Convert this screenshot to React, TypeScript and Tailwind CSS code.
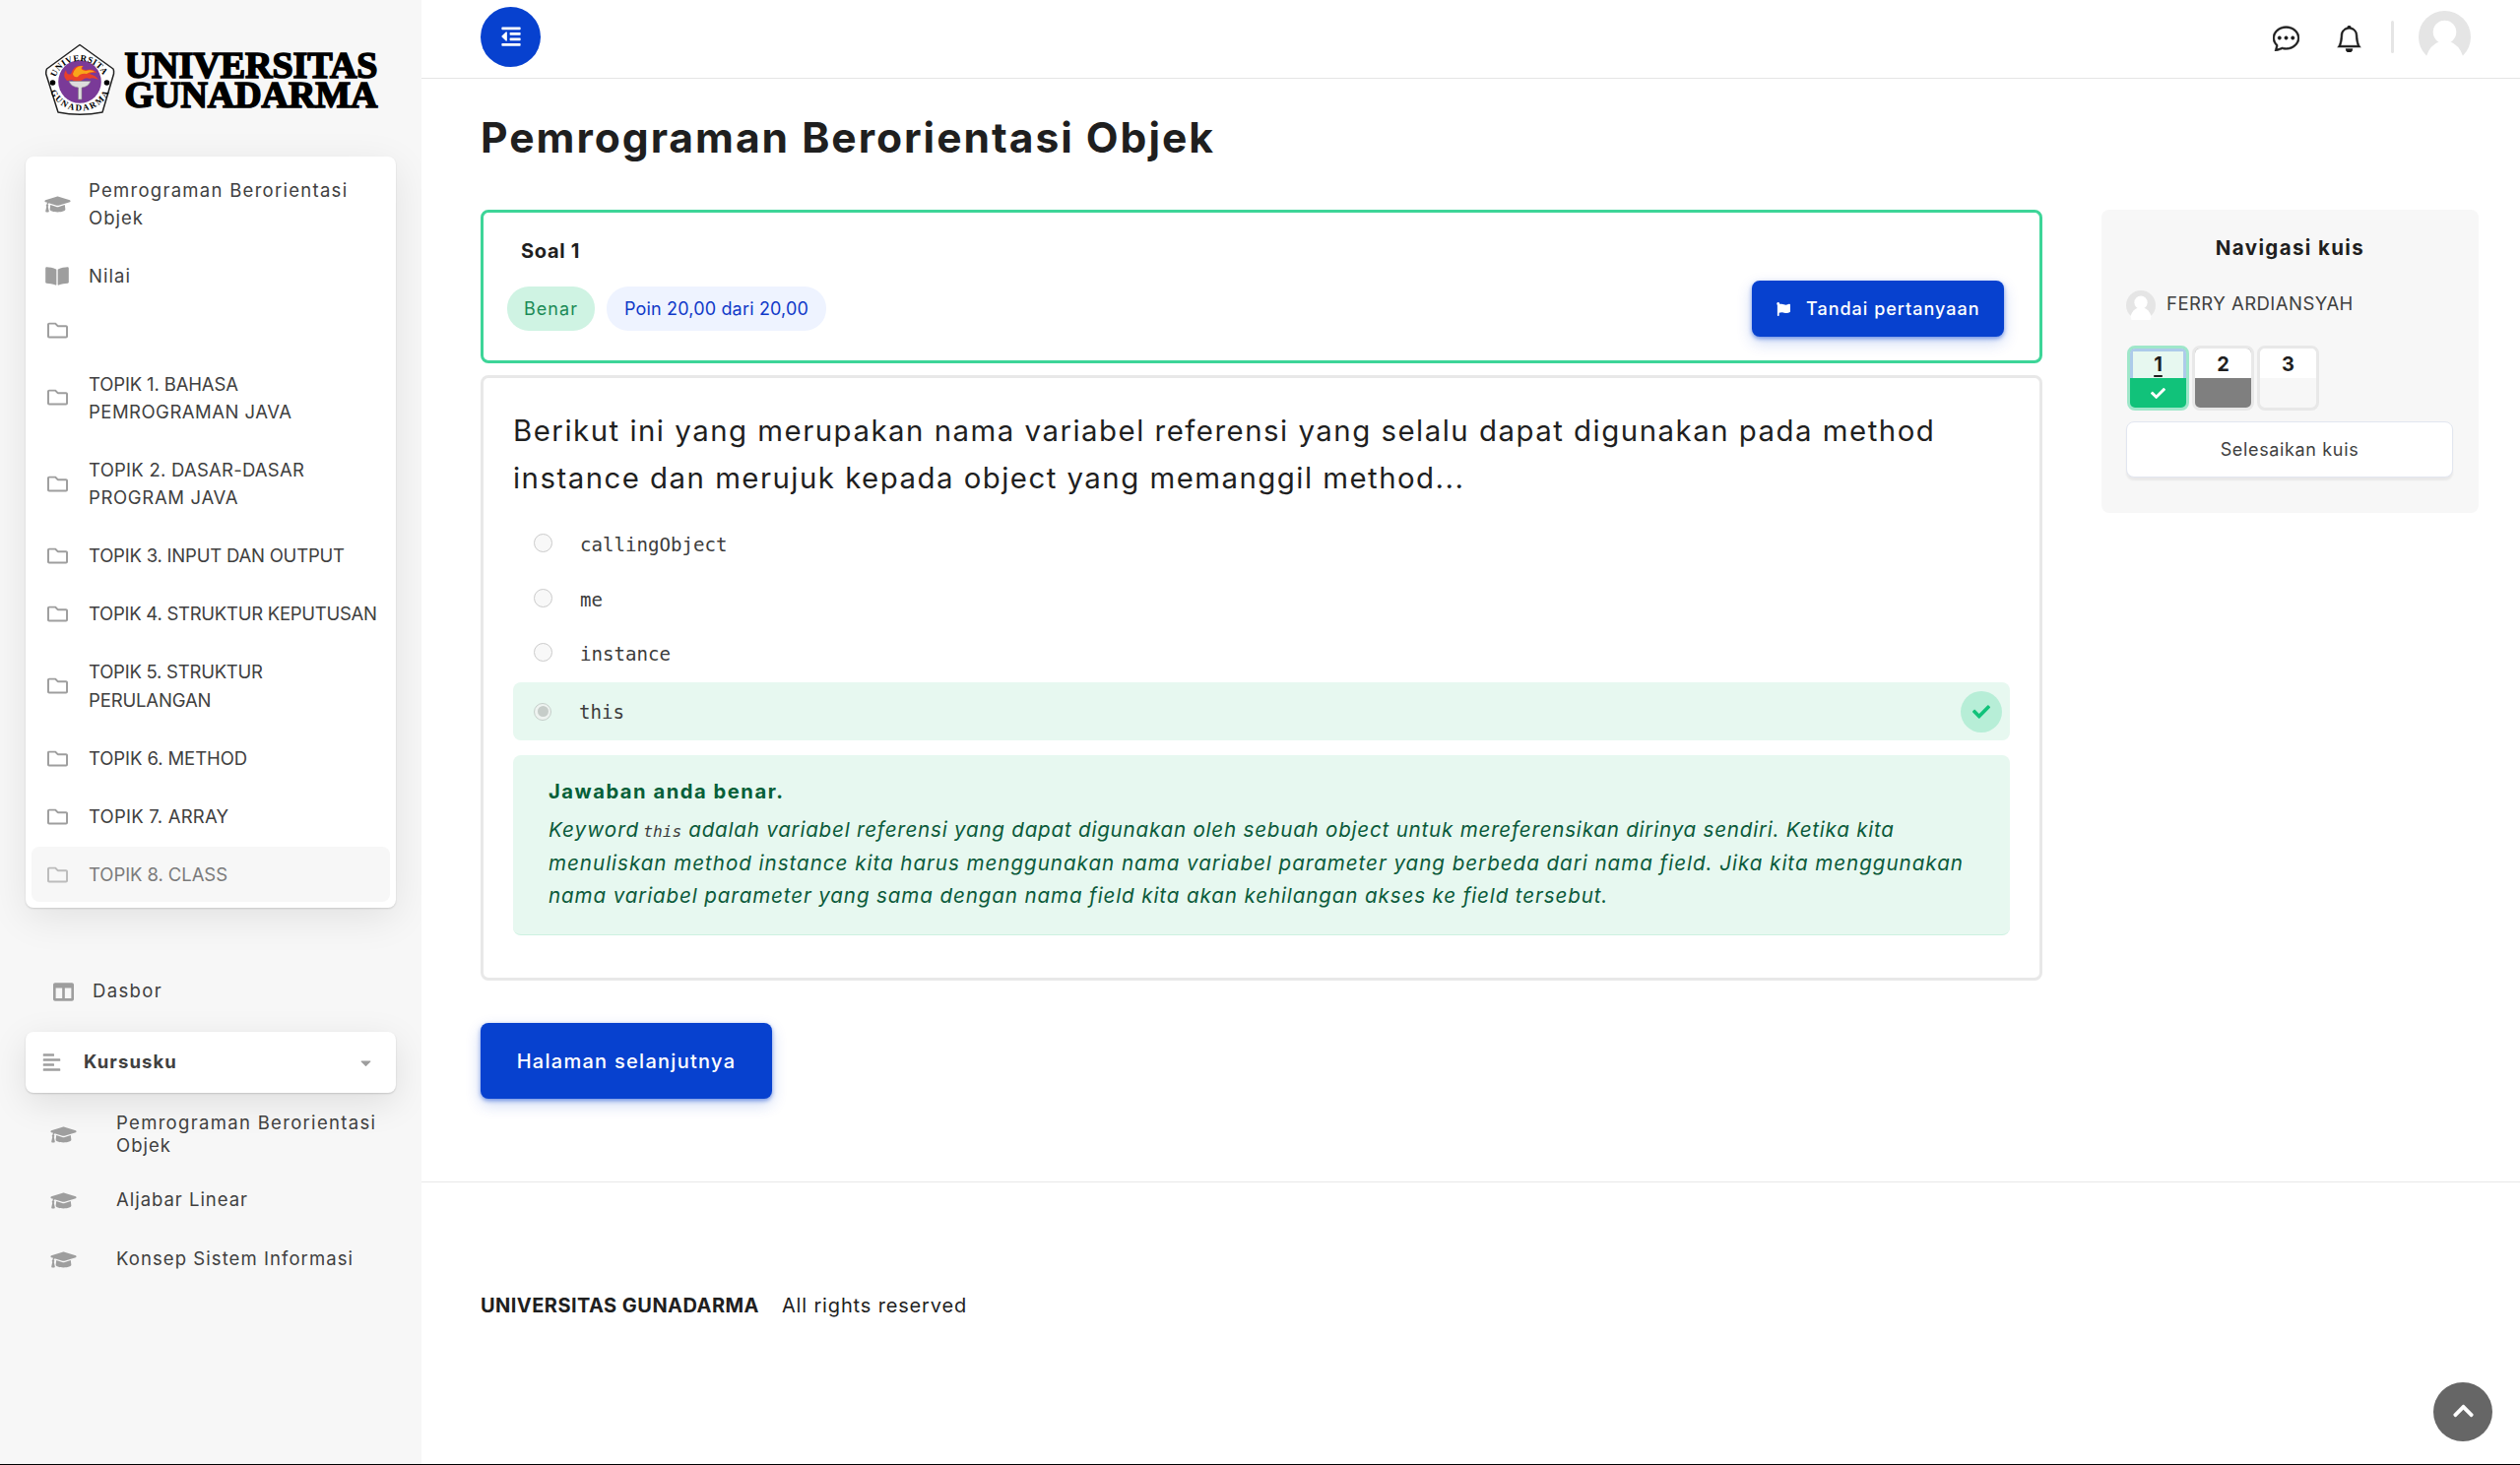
import type { ReactNode } from "react";
import {
  FaAlignLeft,
  FaBookOpen,
  FaCaretDown,
  FaCheck,
  FaChevronUp,
  FaColumns,
  FaFlag,
  FaGraduationCap,
  FaOutdent,
  FaRegFolder,
} from "react-icons/fa";
import { BsBell, BsChatDots } from "react-icons/bs";

type Line = { text: string; track: string };
type CourseItem = { icon: "cap" | "book" | "folder"; lines: Line[]; active?: boolean };

const courseItems: CourseItem[] = [
  {
    icon: "cap",
    lines: [
      { text: "Pemrograman Berorientasi", track: "tracking-[0.069em]" },
      { text: "Objek", track: "tracking-[0.055em]" },
    ],
  },
  { icon: "book", lines: [{ text: "Nilai", track: "tracking-[0.057em]" }] },
  { icon: "folder", lines: [] },
  {
    icon: "folder",
    lines: [
      { text: "TOPIK 1. BAHASA", track: "tracking-[-0.008em]" },
      { text: "PEMROGRAMAN JAVA", track: "tracking-[0.026em]" },
    ],
  },
  {
    icon: "folder",
    lines: [
      { text: "TOPIK 2. DASAR-DASAR", track: "tracking-[0.013em]" },
      { text: "PROGRAM JAVA", track: "tracking-[0.036em]" },
    ],
  },
  { icon: "folder", lines: [{ text: "TOPIK 3. INPUT DAN OUTPUT", track: "tracking-[-0.0116em]" }] },
  { icon: "folder", lines: [{ text: "TOPIK 4. STRUKTUR KEPUTUSAN", track: "tracking-[-0.0145em]" }] },
  {
    icon: "folder",
    lines: [
      { text: "TOPIK 5. STRUKTUR", track: "tracking-[-0.0127em]" },
      { text: "PERULANGAN", track: "tracking-[-0.008em]" },
    ],
  },
  { icon: "folder", lines: [{ text: "TOPIK 6. METHOD", track: "tracking-[-0.005em]" }] },
  { icon: "folder", lines: [{ text: "TOPIK 7. ARRAY", track: "tracking-[0.012em]" }] },
  { icon: "folder", lines: [{ text: "TOPIK 8. CLASS", track: "tracking-[-0.004em]" }], active: true },
];

function CourseIcon({ kind }: { kind: CourseItem["icon"] }) {
  if (kind === "cap") return <FaGraduationCap className="h-[21px] w-[27px]" />;
  if (kind === "book") return <FaBookOpen className="h-[21px] w-[24px]" />;
  return <FaRegFolder className="h-[21px] w-[21px]" />;
}

function Logo() {
  return (
    <div className="ml-[46px] mt-[44px] flex h-[75px] items-start">
      <svg width="72" height="75" viewBox="0 0 72 75" className="overflow-visible">
        <path
          d="M35 1.500 L69 26 Q70 28 69.500 31 L58 70 Q35 74.500 13 70 L0.700 31 Q0.500 28 1.500 26 Z"
          fill="#fff"
          stroke="#222"
          strokeWidth="1.500"
          strokeLinejoin="round"
        />
        <circle cx="35" cy="39" r="21.800" fill="#7a3a98" />
        <path
          d="M22 38 Q17 33 21 27 Q22 33 26 31 Q29 21 39 23 Q35 26 41 27 Q49 25 52 30 Q46 29 45 31 Q52 33 54 37 Q48 34 45 36 Q41 34 38 37 Q32 41 27 37 Z"
          fill="#e8402a"
        />
        <path d="M28 31 Q31 22 38 23 Q34 27 41 28 Q47 26 50 29 Q44 29 42 31 Q36 30 33 34 Q29 35 28 31 Z" fill="#f9a51a" />
        <path d="M24 38.500 H46 Q44 44 37 45 V57 H33.500 V45 Q26 44 24 38.500 Z" fill="#ddd" stroke="#888" strokeWidth="0.600" />
        <circle cx="7.500" cy="40" r="2.800" fill="#000" />
        <circle cx="62.500" cy="40" r="2.800" fill="#000" />
        <defs>
          <path id="arc-top" d="M10.500 34.500 A26 25 0 0 1 59.500 34.500" />
          <path id="arc-bottom" d="M5 48 A31.500 29.500 0 0 0 65 48" />
        </defs>
        <text fontFamily="Liberation Serif, serif" fontWeight="700" fontSize="9" fill="#000">
          <textPath href="#arc-top" textLength="66" lengthAdjust="spacing">
            UNIVERSITAS
          </textPath>
        </text>
        <text fontFamily="Liberation Serif, serif" fontWeight="700" fontSize="9" fill="#000">
          <textPath href="#arc-bottom" startOffset="1" textLength="74" lengthAdjust="spacing">
            GUNADARMA
          </textPath>
        </text>
      </svg>
      <svg width="270" height="75" viewBox="0 0 270 75" className="ml-[6px]">
        <g fontFamily="Liberation Serif, serif" fontWeight="700" fontSize="37" fill="#000" stroke="#000" strokeWidth="1.600">
          <text x="2.500" y="34.500" textLength="257" lengthAdjust="spacingAndGlyphs">
            UNIVERSITAS
          </text>
          <text x="2.500" y="64.500" textLength="257" lengthAdjust="spacingAndGlyphs">
            GUNADARMA
          </text>
        </g>
      </svg>
    </div>
  );
}

function CourseNav() {
  return (
    <nav className="ml-[26px] mt-[40px] flex h-[763px] w-[376px] flex-col gap-[3px] rounded-[8px] bg-white p-[6px] text-[18.5px] leading-[28.4px] text-[#404040] shadow-[0_1px_2px_rgba(0,0,0,0.14),0_10px_40px_rgba(0,0,0,0.09)]">
      {courseItems.map((item, i) => (
        <div
          key={i}
          className={
            item.active
              ? "flex items-center rounded-[8px] bg-[#f7f7f7] py-[13.8px] text-[#7b7b7b]"
              : item.lines.length
                ? "flex items-center py-[13.8px]"
                : "flex h-[47.6px] items-center"
          }
        >
          <span className={item.active ? "flex w-[52px] justify-center text-[#bcbcbc]" : "flex w-[52px] justify-center text-[#9e9e9e]"}>
            <CourseIcon kind={item.icon} />
          </span>
          <span className="ml-[6px] whitespace-nowrap">
            {item.lines.map((l) => (
              <span key={l.text} className={`block ${l.track}`}>
                {l.text}
              </span>
            ))}
          </span>
        </div>
      ))}
    </nav>
  );
}

function SubCourse({ children, className }: { children: ReactNode; className: string }) {
  return (
    <div className={`flex items-center ${className}`}>
      <FaGraduationCap className="ml-[51px] h-[21px] w-[27px] text-[#9e9e9e]" />
      <div className="ml-[40px] whitespace-nowrap">{children}</div>
    </div>
  );
}

function Sidebar() {
  return (
    <aside className="flex w-[428px] shrink-0 flex-col overflow-hidden bg-[#f7f7f7] text-[18.5px] text-[#404040]">
      <Logo />
      <CourseNav />
      <div className="mt-[56px] flex h-[58px] items-center">
        <FaColumns className="ml-[54px] h-[21px] w-[21px] text-[#9e9e9e]" />
        <span className="ml-[19px] tracking-[0.074em]">Dasbor</span>
      </div>
      <div className="ml-[26px] mt-[12px] flex h-[62px] w-[376px] items-center rounded-[8px] bg-white shadow-[0_1px_2px_rgba(0,0,0,0.16),0_10px_36px_rgba(0,0,0,0.10)]">
        <FaAlignLeft className="ml-[17px] h-[20px] w-[19px] text-[#9e9e9e]" />
        <span className="ml-[23px] font-bold tracking-[0.058em]">Kursusku</span>
        <FaCaretDown className="ml-auto mr-[24px] h-[17px] w-[13px] text-[#9e9e9e]" />
      </div>
      <SubCourse className="mt-[14px] h-[56px] leading-[23px]">
        <span className="block tracking-[0.071em]">Pemrograman Berorientasi</span>
        <span className="block tracking-[0.055em]">Objek</span>
      </SubCourse>
      <SubCourse className="mt-[10px] h-[58px]">
        <span className="tracking-[0.0525em]">Aljabar Linear</span>
      </SubCourse>
      <SubCourse className="mt-[2px] h-[58px]">
        <span className="tracking-[0.058em]">Konsep Sistem Informasi</span>
      </SubCourse>
    </aside>
  );
}

function Header() {
  return (
    <header className="flex h-[80px] shrink-0 items-start border-b border-[#e5e5e5]">
      <button className="ml-[60px] mt-[7px] flex h-[61px] w-[61px] items-center justify-center rounded-full bg-[#0741cf] text-white">
        <FaOutdent className="mb-[2px] h-[22px] w-[20px]" />
      </button>
      <BsChatDots className="ml-auto mt-[25px] h-[27px] w-[27px] text-[#1b1b1b]" stroke="currentColor" strokeWidth={0.35} />
      <BsBell className="ml-[37px] mt-[26px] h-[27px] w-[27px] text-[#1b1b1b]" stroke="currentColor" strokeWidth={0.35} />
      <span className="ml-[29px] mt-[21px] h-[33px] w-[3px] rounded-full bg-[#e5e5e5]" />
      <span className="ml-[25px] mr-[50px] mt-[11px]">
        <Avatar className="h-[53px] w-[53px]" />
      </span>
    </header>
  );
}

function Avatar({ className }: { className: string }) {
  return (
    <svg viewBox="0 0 54 54" className={className}>
      <circle cx="27" cy="27" r="27" fill="#e5e5e5" />
      <ellipse cx="27" cy="22" rx="12" ry="12" fill="#fff" />
      <path d="M8 47 Q12 35 22 31.500 H32 Q42 35 46 47 L44 54 H10 Z" fill="#fff" />
    </svg>
  );
}

function QuestionInfo() {
  return (
    <section className="flex h-[156px] flex-col rounded-[8px] border-[3px] border-[#3dd598] bg-white">
      <h2 className="ml-[38px] mt-[24px] text-[20px] font-bold leading-[30px] tracking-[0.035em] text-[#1f1f1f]">Soal 1</h2>
      <div className="flex items-start">
        <span className="ml-[24px] mt-[21px] flex h-[45px] w-[89px] items-center justify-center rounded-[22px] bg-[#cff3e3] text-[18px] tracking-[0.058em] text-[#1b8a56]">
          Benar
        </span>
        <span className="ml-[12px] mt-[21px] flex h-[45px] w-[223px] items-center justify-center rounded-[22px] bg-[#eef3ff] text-[18px] tracking-[0.0095em] text-[#1039c8]">
          Poin 20,00 dari 20,00
        </span>
        <button className="ml-auto mr-[36px] mt-[15px] flex h-[57px] w-[256px] items-center rounded-[8px] bg-[#0741cf] text-[18px] font-medium text-white shadow-[0_2px_4px_rgba(7,65,207,0.5),0_6px_16px_rgba(7,65,207,0.2)]">
          <FaFlag className="ml-[25px] h-[14px] w-[14px]" />
          <span className="ml-[16px] whitespace-nowrap tracking-[0.0555em]">Tandai pertanyaan</span>
        </button>
      </div>
    </section>
  );
}

function Radio({ checked }: { checked?: boolean }) {
  return (
    <span
      className={
        checked
          ? "flex h-[18px] w-[18px] items-center justify-center rounded-full border border-[#c5cfca] bg-[#eef3f0]"
          : "h-[19px] w-[19px] rounded-full border border-[#cbcbcb] bg-[#f8f8f8]"
      }
    >
      {checked && <span className="h-[11px] w-[11px] rounded-full bg-[#c6cdc9]" />}
    </span>
  );
}

function QuestionBody() {
  return (
    <section className="mt-[12px] h-[615px] rounded-[8px] border-[3px] border-[#e8e8e8] bg-white px-[30px] pt-[30px]">
      <p className="whitespace-nowrap text-[29.4px] leading-[48px] text-[#1f1f1f]">
        <span className="block tracking-[0.051em]">
          Berikut ini yang merupakan nama variabel referensi yang selalu dapat digunakan pada method
        </span>
        <span className="block tracking-[0.0502em]">instance dan merujuk kepada object yang memanggil method...</span>
      </p>
      <div className="mt-[14px] flex flex-col font-['DejaVu_Sans_Mono',monospace] text-[19.1px] text-[#3c3c3c]">
        {["callingObject", "me", "instance"].map((t) => (
          <div key={t} className="flex h-[55.5px] items-start">
            <span className="ml-[21px] mt-[18px] flex">
              <Radio />
            </span>
            <span className="ml-[28px] mt-[15px] leading-[30px]">{t}</span>
          </div>
        ))}
      </div>
      <div className="mt-[2.5px] flex h-[59px] items-center rounded-[8px] bg-[#e7f8f0] font-['DejaVu_Sans_Mono',monospace] text-[19.1px] text-[#3c3c3c]">
        <span className="ml-[21px]">
          <Radio checked />
        </span>
        <span className="ml-[28px] mt-[3px]">this</span>
        <span className="ml-auto mr-[8px] flex h-[42px] w-[42px] items-center justify-center rounded-full bg-[#b7eed7] text-[#11c27a]">
          <FaCheck className="h-[18px] w-[18px]" />
        </span>
      </div>
      <div className="mt-[15px] h-[183px] rounded-[8px] border-b border-[#cdf1e1] bg-[#e7f8f0] pl-[36px] pt-[21px] text-[20.6px] text-[#0b5a3a]">
        <div className="text-[20.2px] font-bold leading-[32px] tracking-[0.075em] text-[#065f38]">Jawaban anda benar.</div>
        <div className="mt-[6px] whitespace-nowrap italic leading-[33.7px]">
          <div className="flex h-[33.7px] items-baseline">
            <span className="tracking-[0.051em]">Keyword</span>
            <code className="ml-[4px] font-['DejaVu_Sans_Mono',monospace] text-[16.2px] text-[#3c3c3c]">this</code>
            <span className="ml-[7px] tracking-[0.0376em]">
              adalah variabel referensi yang dapat digunakan oleh sebuah object untuk mereferensikan dirinya sendiri. Ketika kita
            </span>
          </div>
          <div className="tracking-[0.047em]">
            menuliskan method instance kita harus menggunakan nama variabel parameter yang berbeda dari nama field. Jika kita menggunakan
          </div>
          <div className="tracking-[0.0425em]">
            nama variabel parameter yang sama dengan nama field kita akan kehilangan akses ke field tersebut.
          </div>
        </div>
      </div>
    </section>
  );
}

function QuizNav() {
  return (
    <aside className="ml-[60px] mt-[53px] flex h-[308px] w-[383px] flex-col rounded-[8px] bg-[#f7f7f7] px-[25px] pt-[24px]">
      <h2 className="text-center text-[20.5px] font-bold leading-[30px] tracking-[0.067em] text-[#1f1f1f]">Navigasi kuis</h2>
      <div className="mt-[28px] flex h-[30px] items-center">
        <Avatar className="h-[30px] w-[30px]" />
        <span className="mb-[3px] ml-[11px] text-[18.5px] tracking-[0.025em] text-[#404040]">FERRY ARDIANSYAH</span>
      </div>
      <div className="ml-[1px] mt-[26px] flex gap-[3px] text-[20px] font-bold leading-[30px] text-[#1f1f1f]">
        <a className="flex h-[66px] w-[63px] flex-col overflow-hidden rounded-[8px] border-[3px] border-[#9fe7ca] bg-[#11c27a]">
          <span className="h-[30px] border-x-[3px] border-t-[3px] border-[#adcbea] bg-[#e7f8f0] text-center leading-[26px] underline underline-offset-4">
            1
          </span>
          <span className="flex h-[30px] items-center justify-center text-white">
            <FaCheck className="h-[15px] w-[15px]" />
          </span>
        </a>
        <a className="flex h-[66px] w-[63px] flex-col overflow-hidden rounded-[8px] border-[3px] border-[#e8e8e8] bg-[#7f7f7f]">
          <span className="h-[30px] bg-white text-center leading-[32px]">2</span>
        </a>
        <a className="flex h-[66px] w-[63px] flex-col overflow-hidden rounded-[8px] border-[3px] border-[#e8e8e8] bg-[#f7f7f7]">
          <span className="h-[30px] bg-white text-center leading-[32px]">3</span>
        </a>
      </div>
      <button className="mt-[11px] flex h-[57px] w-[332px] items-center justify-center rounded-[8px] border border-[#e2e6f0] bg-white text-[18px] tracking-[0.036em] text-[#404040] shadow-[0_3px_2px_rgba(0,0,0,0.06)]">
        Selesaikan kuis
      </button>
    </aside>
  );
}

export default function App() {
  return (
    <div className="relative flex h-[1488px] w-[2559px] overflow-hidden border-b border-black bg-white font-['Inter',sans-serif]">
      <Sidebar />
      <div className="flex grow flex-col">
        <Header />
        <div className="flex h-[1121px] border-b border-[#e8e8e8]">
          <main className="ml-[60px] w-[1586px]">
            <h1 className="mt-[28px] whitespace-nowrap text-[42.6px] font-bold leading-[64px] tracking-[0.0462em] text-[#1f1f1f]">
              Pemrograman Berorientasi Objek
            </h1>
            <div className="mt-[41px]">
              <QuestionInfo />
              <QuestionBody />
            </div>
            <button className="mt-[43px] flex h-[77px] w-[296px] items-center justify-center rounded-[8px] bg-[#0741cf] text-[20px] font-medium tracking-[0.064em] text-white shadow-[0_2px_4px_rgba(7,65,207,0.5),0_6px_16px_rgba(7,65,207,0.2)]">
              Halaman selanjutnya
            </button>
          </main>
          <div className="mt-[80px]">
            <QuizNav />
          </div>
        </div>
        <footer className="ml-[60px] mt-[110px] flex items-center text-[20px] leading-[30px] text-[#1f1f1f]">
          <b className="tracking-[0.0225em]">UNIVERSITAS GUNADARMA</b>
          <span className="ml-[23px] tracking-[0.042em]">All rights reserved</span>
        </footer>
      </div>
      <button className="absolute bottom-[23px] right-[28px] flex h-[60px] w-[60px] items-center justify-center rounded-full bg-[#666] text-white">
        <FaChevronUp className="mb-[3px] h-[24px] w-[21px]" />
      </button>
    </div>
  );
}
